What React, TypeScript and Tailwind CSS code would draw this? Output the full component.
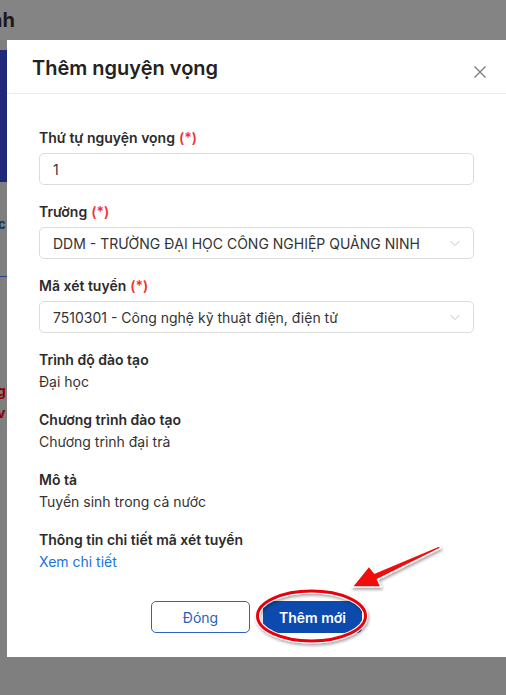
import React from 'react';

const font = { fontFamily: 'Inter, "Noto Sans", sans-serif' };

const Required = () => <span className="text-[#f0302f] ml-1">(*)</span>;

const FieldLabel: React.FC<{ text: string; required?: boolean }> = ({ text, required }) => (
  <div className="text-[14px] leading-5 font-semibold text-[#2b2b2b]">
    {text}
    {required && <Required />}
  </div>
);

const Chevron = () => (
  <svg width="12" height="12" viewBox="0 0 12 12" fill="none" className="shrink-0">
    <path d="M1.5 4l4.5 4.5L10.5 4" stroke="#c4c4c4" strokeWidth="1" />
  </svg>
);

const SelectBox: React.FC<{ value: string }> = ({ value }) => (
  <div className="mt-[5px] h-8 flex items-center justify-between border border-[#dcdcdc] rounded-[5px] pl-[13px] pr-[12px]">
    <span className="text-[14px] text-[#333] truncate">{value}</span>
    <Chevron />
  </div>
);

const InfoItem: React.FC<{ label: string; value: string }> = ({ label, value }) => (
  <div className="mb-[18px]">
    <FieldLabel text={label} />
    <div className="mt-[2px] text-[14px] leading-5 text-[#333]">{value}</div>
  </div>
);

export default function App() {
  return (
    <div className="relative w-[506px] h-[695px] overflow-hidden bg-[#7f7f7f]" style={font}>
      {/* page behind the overlay */}
      <div className="h-10 bg-[#848484] flex items-center">
        <span className="-ml-[10px] text-[20px] font-bold text-[#1a1a1a]">nh</span>
      </div>
      <div className="mt-[10px] w-[7px] h-[132px] bg-[#1f2878]" />
      <div className="mt-[34px] -ml-[2px] text-[13px] font-bold text-[#103b66] leading-4">c</div>
      <div className="mt-[44px] w-[7px] h-px bg-[#27408a]" />
      <div className="mt-[103px] -ml-[3px] text-[14px] font-bold text-[#8a0000] leading-[22px]">g</div>
      <div className="-ml-[3px] text-[14px] font-bold text-[#8a0000] leading-[22px]">v</div>

      {/* modal */}
      <div className="absolute left-[7px] top-[40px] w-[499px] h-[617px] bg-white flex flex-col">
        <div className="h-[54px] shrink-0 flex items-center justify-between pl-[25px] pr-[19px] border-b border-[#ececec]">
          <h2 className="text-[20px] font-semibold text-[#222] pt-[2px]">Thêm nguyện vọng</h2>
          <svg width="14" height="14" viewBox="0 0 14 14" className="mt-[10px]">
            <path d="M1.5 1.5l11 11M12.5 1.5l-11 11" stroke="#7a7a7a" strokeWidth="1.3" />
          </svg>
        </div>

        <div className="px-8 pt-[34px] flex-1 flex flex-col">
          <FieldLabel text="Thứ tự nguyện vọng" required />
          <div className="mt-[5px] h-8 flex items-center border border-[#dcdcdc] rounded-[5px] pl-[13px]">
            <span className="text-[14px] text-[#333]">1</span>
          </div>

          <div className="mt-[17px]">
            <FieldLabel text="Trường" required />
            <SelectBox value="DDM - TRƯỜNG ĐẠI HỌC CÔNG NGHIỆP QUẢNG NINH" />
          </div>

          <div className="mt-[17px] mb-[17px]">
            <FieldLabel text="Mã xét tuyển" required />
            <SelectBox value="7510301 - Công nghệ kỹ thuật điện, điện tử" />
          </div>

          <InfoItem label="Trình độ đào tạo" value="Đại học" />
          <InfoItem label="Chương trình đào tạo" value="Chương trình đại trà" />
          <InfoItem label="Mô tả" value="Tuyển sinh trong cả nước" />
          <div>
            <FieldLabel text="Thông tin chi tiết mã xét tuyển" />
            <div className="mt-[2px] text-[14px] leading-5 text-[#1a73d9]">Xem chi tiết</div>
          </div>

          <div className="mt-[29px] flex justify-center gap-[13px]">
            <button className="w-[99px] h-8 rounded-[5px] border border-[#2f63c2] text-[#2b5fb8] text-[14px] bg-white">
              Đóng
            </button>
            <button className="w-[99px] h-8 rounded-[5px] bg-[#0c4bad] text-white text-[14px] font-semibold">
              Thêm mới
            </button>
          </div>
        </div>
      </div>

      {/* annotation */}
      <svg className="absolute left-0 top-0 pointer-events-none" width="506" height="695" viewBox="0 0 506 695">
        <defs>
          <filter id="sh" x="-20%" y="-20%" width="140%" height="140%">
            <feDropShadow dx="1" dy="2" stdDeviation="1.5" floodColor="#000" floodOpacity="0.35" />
          </filter>
        </defs>
        <g filter="url(#sh)">
          <ellipse cx="311.5" cy="616" rx="54" ry="25" fill="none" stroke="#fff" strokeWidth="5" />
          <ellipse cx="311.5" cy="616" rx="54" ry="25" fill="none" stroke="#e8000b" strokeWidth="3" />
        </g>
        <g filter="url(#sh)">
          <polygon
            points="352,587 381,587 377.5,579.5 440.6,548.2 439.4,545.8 374.5,573 369,566"
            fill="#f20a0a"
            stroke="#fff"
            strokeWidth="1.5"
            strokeLinejoin="round"
          />
        </g>
      </svg>
    </div>
  );
}
